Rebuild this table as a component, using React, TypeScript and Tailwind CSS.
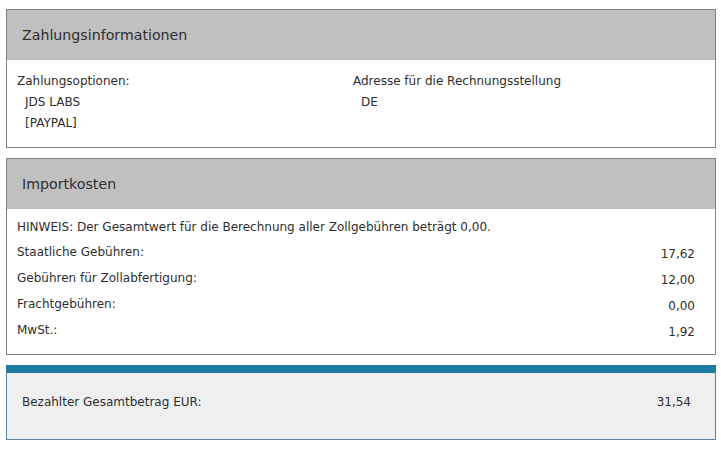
import React from 'react';

const costs = [
  { label: 'Staatliche Gebühren:', value: '17,62' },
  { label: 'Gebühren für Zollabfertigung:', value: '12,00' },
  { label: 'Frachtgebühren:', value: '0,00' },
  { label: 'MwSt.:', value: '1,92' },
];

const App: React.FC = () => {
  return <div className="w-[721px] h-[453px] bg-white text-[#2e2e2e] pt-[9px] pl-[6px] font-['DejaVu_Sans',sans-serif]">
      {/* Zahlungsinformationen */}
      <div className="w-[710px] border border-[#808080]">
        <div className="h-[50px] bg-[#c0c0c0] flex items-center pl-[15px] text-[14.2px] pt-[2px]">
          Zahlungsinformationen
        </div>
        <div className="flex pt-[10px] pb-[13px] text-[12px] leading-[22px]">
          <div className="w-[346px] pl-[10px]">
            <div>Zahlungsoptionen:</div>
            <div className="pl-[8px] leading-[21px]">JDS LABS</div>
            <div className="pl-[8px] leading-[21px]">[PAYPAL]</div>
          </div>
          <div>
            <div>Adresse für die Rechnungsstellung</div>
            <div className="pl-[8px] leading-[21px]">DE</div>
          </div>
        </div>
      </div>
      {/* Importkosten */}
      <div className="w-[710px] mt-[10px] border border-[#808080]">
        <div className="h-[50px] bg-[#c0c0c0] flex items-center pl-[15px] text-[14.2px] pt-[2px]">
          Importkosten
        </div>
        <div className="pt-[5px] pb-[10px] pl-[10px] pr-[20px] text-[12px]">
          <div className="leading-[26px]">HINWEIS: Der Gesamtwert für die Berechnung aller Zollgebühren beträgt 0,00.</div>
          {costs.map(c => <div key={c.label} className="flex justify-between leading-[25px] h-[26px]">
              <span>{c.label}</span>
              <span className="pt-[2px]">{c.value}</span>
            </div>)}
        </div>
      </div>
      {/* Gesamtbetrag */}
      <div className="w-[710px] mt-[10px] border-t-[8px] border-t-[#1b7ba3] border-x border-b border-x-[#5b8395] border-b-[#5b8395] bg-[#efeff0] h-[75px] flex items-center justify-between pl-[15px] pr-[24px] text-[12px] pb-[9px]">
        <span>Bezahlter Gesamtbetrag EUR:</span>
        <span>31,54</span>
      </div>
    </div>;
};

export default App;
